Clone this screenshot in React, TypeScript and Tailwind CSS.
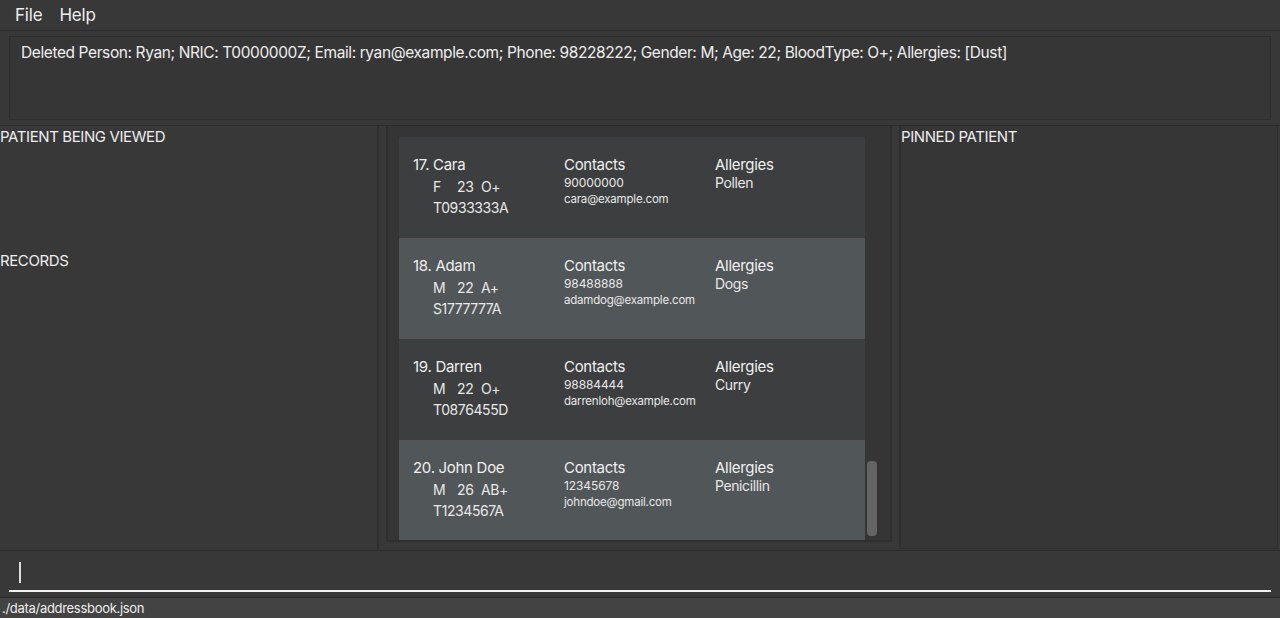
const patients = [
  { idx: 17, name: 'Cara', gender: 'F', age: '23', blood: 'O+', nric: 'T0933333A', phone: '90000000', email: 'cara@example.com', allergy: 'Pollen' },
  { idx: 18, name: 'Adam', gender: 'M', age: '22', blood: 'A+', nric: 'S1777777A', phone: '98488888', email: 'adamdog@example.com', allergy: 'Dogs' },
  { idx: 19, name: 'Darren', gender: 'M', age: '22', blood: 'O+', nric: 'T0876455D', phone: '98884444', email: 'darrenloh@example.com', allergy: 'Curry' },
  { idx: 20, name: 'John Doe', gender: 'M', age: '26', blood: 'AB+', nric: 'T1234567A', phone: '12345678', email: 'johndoe@gmail.com', allergy: 'Penicillin' },
];

function PatientCard({ p, odd }: { p: (typeof patients)[number]; odd: boolean }) {
  return (
    <div className={`h-[101px] shrink-0 flex pl-[14px] pt-[18px] ${odd ? 'bg-[#515658]' : 'bg-[#3c3e3f]'}`}>
      <div className="w-[151px]">
        <div className="text-[15px] leading-[20px] tracking-[-0.3px] text-[#f0f0f0]">
          {p.idx}. {p.name}
        </div>
        <div className="pl-[20px] text-[14px] leading-[21px] tracking-[-0.4px] text-[#e8e8e8] mt-[1px]">
          <div className="flex">
            <span className="w-[24px]">{p.gender}</span>
            <span className="w-[24px]">{p.age}</span>
            <span>{p.blood}</span>
          </div>
          <div>{p.nric}</div>
        </div>
      </div>
      <div className="w-[151px]">
        <div className="text-[15px] leading-[20px] tracking-[-0.3px] text-[#f0f0f0]">Contacts</div>
        <div className="text-[12px] leading-[16px] tracking-[-0.1px] text-[#e8e8e8]">{p.phone}</div>
        <div className="text-[11.5px] leading-[16px] tracking-[-0.2px] text-[#e8e8e8]">{p.email}</div>
      </div>
      <div>
        <div className="text-[15px] leading-[20px] tracking-[-0.3px] text-[#f0f0f0]">Allergies</div>
        <div className="text-[14px] leading-[16px] tracking-[-0.4px] text-[#e8e8e8]">{p.allergy}</div>
      </div>
    </div>
  );
}

export default function App() {
  return (
    <div
      className="w-[1280px] h-[618px] bg-[#383838] text-[#eeeeee] flex flex-col overflow-hidden"
      style={{ fontFamily: 'Inter, "Open Sans", sans-serif' }}
    >
      {/* Menu bar */}
      <div className="h-[31px] flex items-center gap-[17px] pl-[15px] pt-[1px] border-b border-[#2c2c2c] bg-[#383838] text-[17px] tracking-[-0.2px]">
        <span>File</span>
        <span>Help</span>
      </div>

      {/* Result display */}
      <div className="h-[95px] px-[9px] pt-[5px] pb-[5px] border-b border-[#2c2c2c]">
        <div className="h-full border border-[#2e2e2e] bg-[#363636] pl-[11px] pt-[5px] text-[15.5px] leading-[22px] tracking-[-0.4px]">
          Deleted Person: Ryan; NRIC: T0000000Z; Email: ryan@example.com; Phone: 98228222; Gender: M; Age: 22; BloodType: O+; Allergies: [Dust]
        </div>
      </div>

      {/* Main area */}
      <div className="h-[425px] flex border-b border-[#2c2c2c]">
        <div className="w-[379px] border-r-2 border-[#2f2f2f] flex flex-col text-[15px] leading-[20px] tracking-[-0.4px]">
          <div className="pt-[1px] h-[125px]">PATIENT BEING VIEWED</div>
          <div>RECORDS</div>
        </div>
        <div className="w-[513px] pl-[7px] pb-[8px] bg-[#383838]">
          <div className="h-full border-l-2 border-r-2 border-b-2 border-[#2f2f2f] bg-[#353535] flex pl-[11px] pt-[11px] pr-[11px] overflow-hidden">
            <div className="w-[466px] flex flex-col">
              {patients.map((p, i) => (
                <PatientCard key={p.idx} p={p} odd={i % 2 === 1} />
              ))}
            </div>
            <div className="flex-1 flex flex-col justify-end pb-[4px] pl-[2px]">
              <div className="w-[10px] h-[75px] rounded-[4px] bg-[#646464]" />
            </div>
          </div>
        </div>
        <div className="flex-1 pl-[7px] pr-[2px] pb-[1px]">
          <div className="h-full border-l-2 border-r border-b border-[#2f2f2f] bg-[#363636] pt-[1px] text-[15px] leading-[20px] tracking-[-0.4px]">
            PINNED PATIENT
          </div>
        </div>
      </div>

      {/* Command box */}
      <div className="h-[46px] px-[9px] pt-[10px]">
        <div className="h-[31px] border-b-2 border-[#f2f2f2] pl-[10px] pt-[1px]">
          <div className="w-[2px] h-[21px] bg-[#dddddd]" />
        </div>
      </div>

      {/* Status bar */}
      <div className="flex-1 bg-[#434343] border-t border-[#2c2c2c] pl-[2px] text-[13px] leading-[20px] tracking-[-0.3px]">
        ./data/addressbook.json
      </div>
    </div>
  );
}
